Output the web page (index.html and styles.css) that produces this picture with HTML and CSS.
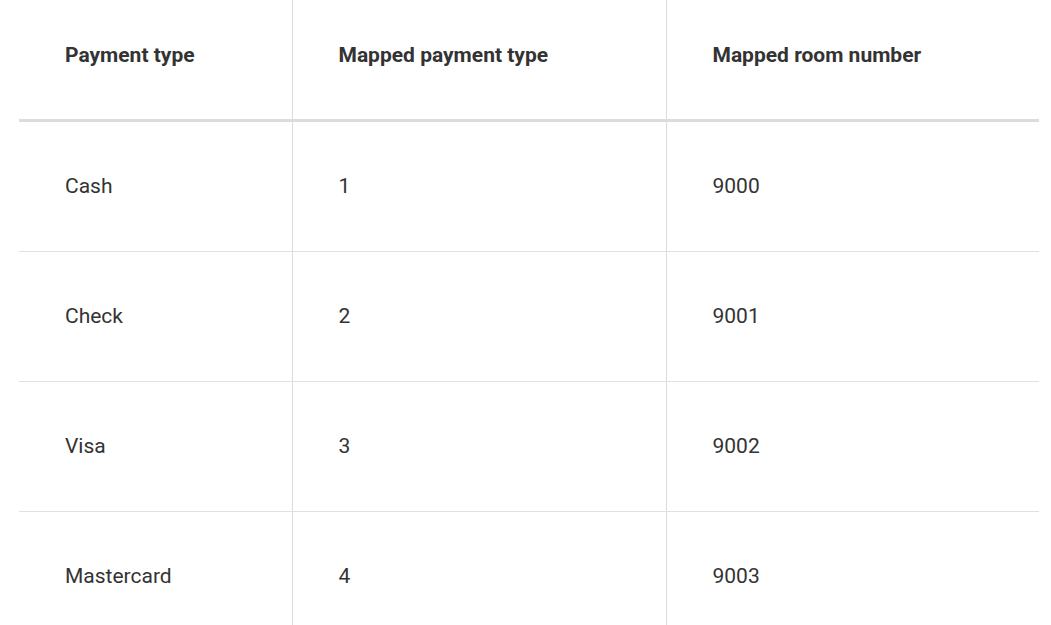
FILE: index.html
```html
<!DOCTYPE html>
<html>
<head>
<meta charset="utf-8">
<link rel="stylesheet" href="styles.css">
</head>
<body>
<table class="map-table">
  <thead>
    <tr>
      <th class="col-a">Payment type</th>
      <th class="col-b">Mapped payment type</th>
      <th class="col-c">Mapped room number</th>
    </tr>
  </thead>
  <tbody>
    <tr><td>Cash</td><td>1</td><td>9000</td></tr>
    <tr><td>Check</td><td>2</td><td>9001</td></tr>
    <tr><td>Visa</td><td>3</td><td>9002</td></tr>
    <tr><td>Mastercard</td><td>4</td><td>9003</td></tr>
  </tbody>
</table>
</body>
</html>
```
FILE: styles.css
```css
html, body {
  margin: 0;
  padding: 0;
  background: #fff;
}
body {
  padding-left: 19px;
  font-family: Roboto, "Liberation Sans", sans-serif;
  color: #333;
}
.map-table {
  width: 1020px;
  border-collapse: collapse;
  table-layout: fixed;
}
.col-a { width: 273px; }
.col-b { width: 374px; }
.map-table th,
.map-table td {
  text-align: left;
  padding: 0 0 0 46px;
  font-size: 21px;
  line-height: 24px;
  border-left: 1px solid #dcdcdc;
}
.map-table th:first-child,
.map-table td:first-child {
  border-left: none;
}
.map-table th {
  font-weight: 700;
  height: 120px;
  padding-top: 0;
  padding-bottom: 8px;
  box-sizing: border-box;
  vertical-align: middle;
  border-bottom: 3px solid #dcdcdc;
}
.map-table td {
  font-weight: 400;
  height: 129px;
  vertical-align: middle;
  border-bottom: 1px solid #e0e0e0;
}
```
